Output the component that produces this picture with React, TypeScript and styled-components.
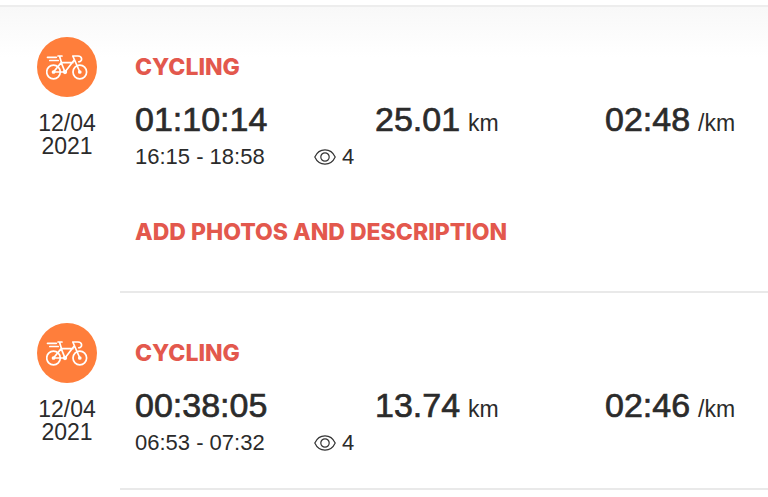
import React from "react";
import styled, { createGlobalStyle } from "styled-components";

const GlobalStyle = createGlobalStyle`
  *, *::before, *::after { box-sizing: border-box; }
  body {
    margin: 0;
    background: #ffffff;
    color: #2b2b2b;
    font-family: "Liberation Sans", Arial, sans-serif;
    font-size: 22px;
    line-height: 24px;
  }
`;

const Page = styled.main`
  margin-top: 5px;
  border-top: 2px solid #ededed;
  background: linear-gradient(#f8f8f8, #ffffff 50px);
`;

const Feed = styled.ul`
  margin: 0;
  padding: 0;
  list-style: none;
`;

const Entry = styled.li`
  display: grid;
  grid-template-columns: 120px minmax(0, 1fr);
`;

const DateColumn = styled.div`
  display: flex;
  flex-direction: column;
  align-items: center;
  gap: 15px;
  padding: 30px 0 0 14px;
`;

const Badge = styled.span`
  display: grid;
  place-items: center;
  width: 60px;
  height: 60px;
  border-radius: 50%;
  background: #ff7e3b;
`;

const DateText = styled.time`
  font-size: 23px;
  line-height: 23px;
  text-align: center;
`;

const Details = styled.article`
  padding: 47px 16px 32px 15px;
  border-bottom: 2px solid #e9e9e9;
`;

const Title = styled.h2`
  margin: 0;
  color: #e3584d;
  font-family: Inter, sans-serif;
  font-size: 23px;
  font-weight: 800;
  line-height: 26px;
`;

const Stats = styled.div`
  display: grid;
  grid-template-columns: 240px minmax(0, 1fr) 147px;
  margin-top: 19px;
`;

const Stat = styled.div`
  white-space: nowrap;
  font-size: 23px;
  line-height: 40px;
`;

const Figure = styled.span`
  margin-right: 8px;
  font-size: 34px;
  -webkit-text-stroke: 0.02em currentColor;
`;

const Meta = styled.div`
  display: grid;
  grid-template-columns: 179px auto;
  margin-top: 1px;
  line-height: 26px;
`;

const Views = styled.span`
  display: flex;
  align-items: center;
  gap: 6px;
`;

const AddButton = styled.button`
  display: block;
  margin: 49px 0 14px;
  padding: 0;
  border: 0;
  background: none;
  color: #e3584d;
  font-family: Inter, sans-serif;
  font-size: 23px;
  font-weight: 800;
  line-height: 26px;
  text-align: left;
  cursor: pointer;
`;

const BikeIcon = () => (
  <svg width="42" height="26" viewBox="0 0 42 26" fill="none" stroke="#fff" strokeWidth="1.7" strokeLinecap="round" strokeLinejoin="round" aria-hidden="true">
    <circle cx="7.5" cy="18" r="6.8" />
    <circle cx="33.8" cy="18" r="6.8" />
    <path d="M7.5 18 15.2 8.6 19 18 28.2 6M7.5 18H19M15.2 8.6H27M15.5 8.8 13.8 3M12 2h4M33.8 18 26.8 2H32c4.5 0 4.8 5.5.8 5.8M1.5 3.3h8.8M3.8 6.5h8.4" />
    <circle cx="7.5" cy="18" r="1" fill="#fff" />
    <circle cx="19" cy="18" r="1.3" fill="#fff" />
    <circle cx="33.8" cy="18" r="1" fill="#fff" />
  </svg>
);

const EyeIcon = () => (
  <svg width="22" height="16" viewBox="0 0 22 16" fill="none" stroke="#333" strokeWidth="1.2" role="img" aria-label="Views">
    <path d="M.8 8C3 3.2 6.4.9 11 .9S19 3.2 21.2 8C19 12.8 15.6 15.1 11 15.1S3 12.8.8 8Z" />
    <circle cx="11" cy="8" r="4.2" />
  </svg>
);

interface Activity {
  id: number;
  duration: string;
  distance: string;
  pace: string;
  period: string;
  views: number;
  canAdd: boolean;
}

const activities: Activity[] = [
  { id: 1, duration: "01:10:14", distance: "25.01", pace: "02:48", period: "16:15 - 18:58", views: 4, canAdd: true },
  { id: 2, duration: "00:38:05", distance: "13.74", pace: "02:46", period: "06:53 - 07:32", views: 4, canAdd: false },
];

const ActivityEntry = ({ activity }: { activity: Activity }) => (
  <Entry>
    <DateColumn>
      <Badge><BikeIcon /></Badge>
      <DateText dateTime="2021-04-12">12/04<br />2021</DateText>
    </DateColumn>
    <Details>
      <Title>CYCLING</Title>
      <Stats>
        <Stat><Figure>{activity.duration}</Figure></Stat>
        <Stat><Figure>{activity.distance}</Figure>km</Stat>
        <Stat><Figure>{activity.pace}</Figure>/km</Stat>
      </Stats>
      <Meta>
        <span>{activity.period}</span>
        <Views><EyeIcon />{activity.views}</Views>
      </Meta>
      {activity.canAdd && <AddButton type="button">ADD PHOTOS AND DESCRIPTION</AddButton>}
    </Details>
  </Entry>
);

export default function App() {
  return (
    <>
      <GlobalStyle />
      <Page>
        <Feed>
          {activities.map((activity) => <ActivityEntry key={activity.id} activity={activity} />)}
        </Feed>
      </Page>
    </>
  );
}
